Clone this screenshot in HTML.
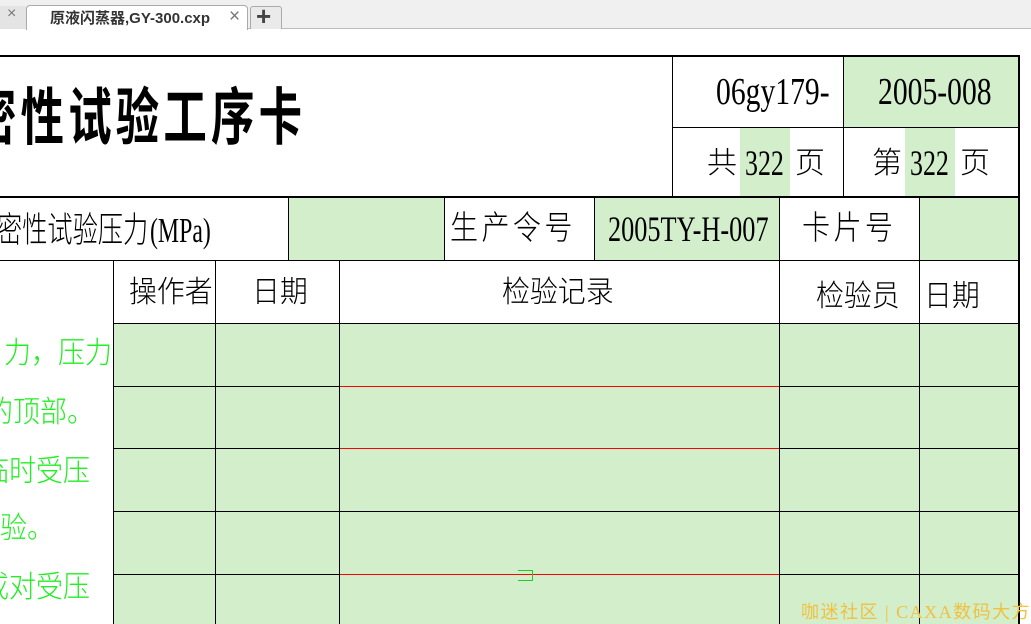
<!DOCTYPE html>
<html><head><meta charset="utf-8"><style>
*{margin:0;padding:0;box-sizing:border-box}
body{width:1031px;height:624px;overflow:hidden;background:#fff;position:relative;font-family:"Liberation Serif","Noto Serif CJK SC",serif}
.a{position:absolute}
.g{position:absolute;background:#d3eecb}
.h{position:absolute;background:#000;height:1px}
.v{position:absolute;background:#000;width:1px}
.t{position:absolute;white-space:nowrap;color:#000;font-family:"Liberation Serif","Noto Sans CJK SC",sans-serif;font-weight:300;transform-origin:0 0;line-height:1}
.gr{color:#22ee22;font-size:30px;position:absolute;white-space:nowrap;font-family:"Noto Sans CJK SC",sans-serif;font-weight:300;transform:scaleX(.9);transform-origin:0 0}
</style></head><body>
<!-- tab bar -->
<div class="a" style="left:0;top:0;width:1031px;height:29px;background:#f0f0f0;border-bottom:1px solid #bbb"></div>
<div class="a" style="left:0;top:6px;width:26px;height:23px;background:#e4e4e4"></div>
<div class="a" style="left:7px;top:5px;font:16px 'Liberation Sans';color:#777">×</div>
<div class="a" style="left:26px;top:5px;width:222px;height:25px;background:#fff;border:1px solid #aaa;border-bottom:none;border-radius:4px 4px 0 0"></div>
<div class="a" style="left:50px;top:7px;font:bold 15px 'Liberation Sans','Noto Sans CJK SC',sans-serif;color:#333">原液闪蒸器,GY-300.cxp</div>
<div class="a" style="left:229px;top:6px;font:19px 'Liberation Sans';color:#777">×</div>
<div class="a" style="left:250px;top:6px;width:32px;height:23px;background:#eaeaea;border:1px solid #aaa;border-bottom:none;border-radius:3px 3px 0 0"></div>
<div class="a" style="left:256px;top:1px;font:bold 26px 'Liberation Sans';color:#444">+</div>

<!-- greens -->
<div class="g" style="left:843px;top:57px;width:175px;height:70px"></div>
<div class="g" style="left:740px;top:128px;width:50px;height:69px"></div>
<div class="g" style="left:905px;top:128px;width:50px;height:69px"></div>
<div class="g" style="left:288px;top:198px;width:156px;height:62px"></div>
<div class="g" style="left:594px;top:198px;width:185px;height:62px"></div>
<div class="g" style="left:919px;top:198px;width:99px;height:62px"></div>
<div class="g" style="left:113px;top:323px;width:905px;height:301px"></div>

<!-- lines -->
<div class="h" style="left:0;top:55px;width:1020px;height:2px"></div>
<div class="v" style="left:1018px;top:55px;height:569px;width:2px"></div>
<div class="v" style="left:672px;top:56px;height:141px"></div>
<div class="v" style="left:843px;top:56px;height:141px"></div>
<div class="h" style="left:672px;top:127px;width:346px"></div>
<div class="h" style="left:0;top:196px;width:1018px;height:2px"></div>
<div class="v" style="left:288px;top:197px;height:63px"></div>
<div class="v" style="left:444px;top:197px;height:63px"></div>
<div class="v" style="left:594px;top:197px;height:63px"></div>
<div class="v" style="left:779px;top:197px;height:427px"></div>
<div class="v" style="left:919px;top:197px;height:427px"></div>
<div class="h" style="left:0;top:260px;width:1018px"></div>
<div class="v" style="left:113px;top:260px;height:364px"></div>
<div class="v" style="left:215px;top:260px;height:364px"></div>
<div class="v" style="left:339px;top:260px;height:364px"></div>
<div class="h" style="left:113px;top:323px;width:905px"></div>
<div class="h" style="left:113px;top:386px;width:905px"></div>
<div class="h" style="left:113px;top:448px;width:905px"></div>
<div class="h" style="left:113px;top:511px;width:905px"></div>
<div class="h" style="left:113px;top:574px;width:905px"></div>
<div class="h" style="left:340px;top:386px;width:439px;background:#f00"></div>
<div class="h" style="left:340px;top:448px;width:439px;background:#f00"></div>
<div class="h" style="left:340px;top:574px;width:439px;background:#f00"></div>
<div class="a" style="left:518px;top:570px;width:15px;height:11px;border:1px solid #2c2;border-left:none"></div>

<!-- texts -->
<div class="t" style="left:-27px;top:88px;font-size:62px;font-weight:bold;letter-spacing:6px;transform:scaleX(.7)">密性试验工序卡</div>
<div class="t" style="left:716px;top:73px;font-size:38px;transform:scaleX(.78)">06gy179-</div>
<div class="t" style="left:878px;top:73px;font-size:38px;transform:scaleX(.78)">2005-008</div>
<div class="t" style="left:707px;top:149px;font-size:30px">共</div>
<div class="t" style="left:745px;top:145px;font-size:36px;transform:scaleX(.72)">322</div>
<div class="t" style="left:795px;top:149px;font-size:30px">页</div>
<div class="t" style="left:872px;top:149px;font-size:30px">第</div>
<div class="t" style="left:910px;top:145px;font-size:36px;transform:scaleX(.72)">322</div>
<div class="t" style="left:960px;top:149px;font-size:30px">页</div>
<div class="t" style="left:-3px;top:213px;font-size:35px;transform:scaleX(.72)">密性试验压力</div>
<div class="t" style="left:150px;top:213px;font-size:35px;transform:scaleX(.68)">(MPa)</div>
<div class="t" style="left:450px;top:213px;font-size:33px;letter-spacing:4px;transform:scaleX(.85)">生产令号</div>
<div class="t" style="left:608px;top:211px;font-size:36px;transform:scaleX(.73)">2005TY-H-007</div>
<div class="t" style="left:802px;top:213px;font-size:33px;letter-spacing:4px;transform:scaleX(.85)">卡片号</div>
<div class="t" style="left:129px;top:278px;font-size:30px;transform:scaleX(.93)">操作者</div>
<div class="t" style="left:252px;top:278px;font-size:30px;transform:scaleX(.93)">日期</div>
<div class="t" style="left:502px;top:278px;font-size:30px;transform:scaleX(.93)">检验记录</div>
<div class="t" style="left:816px;top:282px;font-size:30px;transform:scaleX(.93)">检验员</div>
<div class="t" style="left:924px;top:282px;font-size:30px;transform:scaleX(.93)">日期</div>
<div class="gr" style="left:4px;top:328px">力，压力</div>
<div class="gr" style="left:-14px;top:387px">的顶部。</div>
<div class="gr" style="left:-18px;top:446px">临时受压</div>
<div class="gr" style="left:0px;top:503px">验。</div>
<div class="gr" style="left:-18px;top:562px">或对受压</div>
<div class="a" style="left:801px;top:598px;font:18px 'Liberation Serif','Noto Sans CJK SC',sans-serif;letter-spacing:1.5px;color:#f0c040;white-space:nowrap">咖迷社区 | CAXA数码大方</div>
</body></html>
